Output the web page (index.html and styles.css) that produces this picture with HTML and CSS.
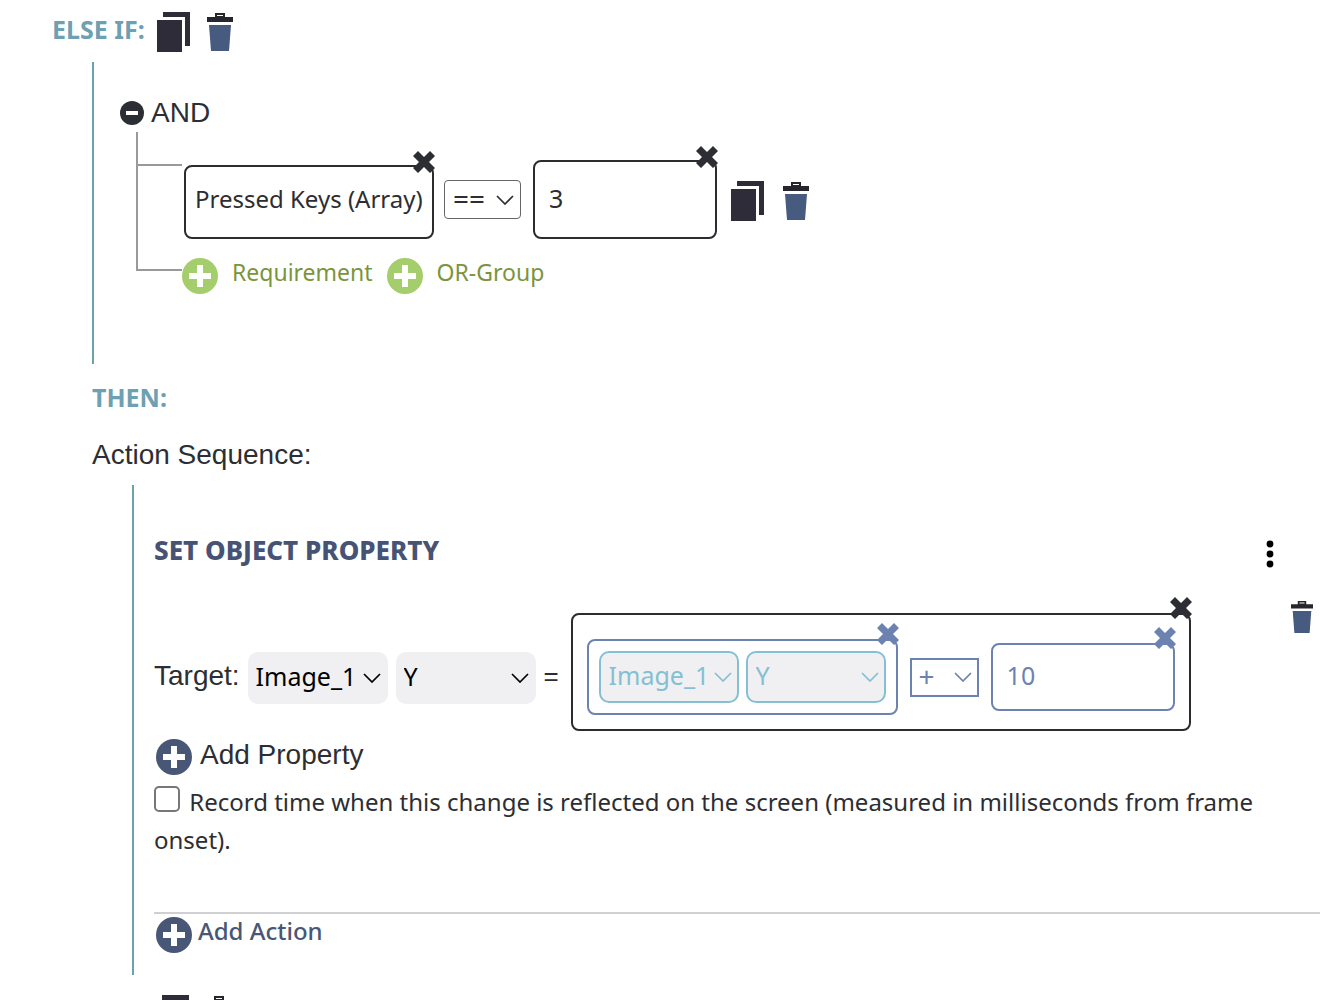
FILE: index.html
```
<!DOCTYPE html>
<html lang="en">
<head>
    <meta charset="UTF-8">
    <meta name="viewport" content="width=device-width, initial-scale=1">
    <title>Trigger Editor</title>
    <link rel="stylesheet" href="styles.css">
</head>
<body>

<!-- icon definitions -->
<svg class="icon-defs" aria-hidden="true">
    <symbol id="copy" viewBox="0 0 34 40"><path d="M6 0h27v34h-5V5H6z"/><path d="M0 8h25v32H0z"/></symbol>
    <symbol id="trash" viewBox="0 0 26 38">
        <path class="trash-lid" fill-rule="evenodd" d="M0 4h8V0h10v4h8v5H0zM10 2v1h6V2z"/>
        <path class="trash-can" d="M2 12h22l-2 26H4z"/>
    </symbol>
    <symbol id="plus" viewBox="0 0 36 36"><circle cx="18" cy="18" r="18"/><path fill="#fff" d="M15 7h6v8h8v6h-8v8h-6v-8H7v-6h8z"/></symbol>
    <symbol id="minus" viewBox="0 0 24 24"><circle cx="12" cy="12" r="12"/><path fill="#fff" d="M6 10h12v4H6z"/></symbol>
    <symbol id="close" viewBox="0 0 22 22"><path d="M5 0l6 6 6-6 5 5-6 6 6 6-5 5-6-6-6 6-5-5 6-6-6-6z"/></symbol>
    <symbol id="arrow" viewBox="0 0 18 10"><path fill="none" stroke="currentColor" stroke-width="1.7" d="M1 1l8 8 8-8"/></symbol>
    <symbol id="dots" viewBox="0 0 8 28"><circle cx="4" cy="4" r="3.4"/><circle cx="4" cy="14" r="3.4"/><circle cx="4" cy="24" r="3.4"/></symbol>
</svg>

<div class="branch">
    <div class="branch-header">
        <h2 class="keyword">ELSE IF:</h2>
        <button class="icon-button" aria-label="Copy branch"><svg class="copy"><use href="#copy"/></svg></button>
        <button class="icon-button" aria-label="Delete branch"><svg class="trash"><use href="#trash"/></svg></button>
    </div>

    <!-- condition -->
    <div class="condition">
        <div class="group-header">
            <button class="icon-button" aria-label="Collapse group"><svg class="minus"><use href="#minus"/></svg></button>
            <span>AND</span>
        </div>
        <div class="tree">
            <div class="tree-lines">
                <div class="line-first"></div>
                <div class="line-last"></div>
            </div>
            <div class="tree-content">
                <div class="requirement">
                    <div class="value-box keys-box">
                        <span>Pressed Keys (Array)</span>
                        <button class="close" aria-label="Clear value"><svg><use href="#close"/></svg></button>
                    </div>
                    <div class="select compare">
                        <select aria-label="Comparison"><option>==</option><option>!=</option></select>
                        <svg class="arrow"><use href="#arrow"/></svg>
                    </div>
                    <div class="value-box number-box">
                        <input type="text" value="3" aria-label="Compare with">
                        <button class="close" aria-label="Clear value"><svg><use href="#close"/></svg></button>
                    </div>
                    <div class="requirement-tools">
                        <button class="icon-button" aria-label="Copy requirement"><svg class="copy"><use href="#copy"/></svg></button>
                        <button class="icon-button" aria-label="Delete requirement"><svg class="trash"><use href="#trash"/></svg></button>
                    </div>
                </div>
                <div class="add-row">
                    <button class="add add-green"><svg class="plus"><use href="#plus"/></svg><span>Requirement</span></button>
                    <button class="add add-green"><svg class="plus"><use href="#plus"/></svg><span>OR-Group</span></button>
                </div>
            </div>
        </div>
    </div>

    <!-- actions -->
    <div class="then">
        <h2 class="keyword">THEN:</h2>
        <p class="sequence-title">Action Sequence:</p>
        <div class="sequence">
            <div class="action-header">
                <h3>SET OBJECT PROPERTY</h3>
                <button class="icon-button" aria-label="Action menu"><svg class="dots"><use href="#dots"/></svg></button>
            </div>
            <div class="property">
                <div class="target">
                    <span class="target-label">Target:</span>
                    <div class="select filled">
                        <select aria-label="Target object"><option>Image_1</option></select>
                        <svg class="arrow"><use href="#arrow"/></svg>
                    </div>
                    <div class="select filled">
                        <select aria-label="Target property"><option>Y</option><option>X</option></select>
                        <svg class="arrow"><use href="#arrow"/></svg>
                    </div>
                    <span class="equals">=</span>
                </div>
                <div class="value-box expression">
                    <div class="value-box blue operand">
                        <div class="select filled light">
                            <select aria-label="Source object"><option>Image_1</option></select>
                            <svg class="arrow"><use href="#arrow"/></svg>
                        </div>
                        <div class="select filled light">
                            <select aria-label="Source property"><option>Y</option><option>X</option></select>
                            <svg class="arrow"><use href="#arrow"/></svg>
                        </div>
                        <button class="close" aria-label="Clear value"><svg><use href="#close"/></svg></button>
                    </div>
                    <div class="select operator">
                        <select aria-label="Operator"><option>+</option><option>-</option></select>
                        <svg class="arrow"><use href="#arrow"/></svg>
                    </div>
                    <div class="value-box blue amount">
                        <input type="text" value="10" aria-label="Amount">
                        <button class="close" aria-label="Clear value"><svg><use href="#close"/></svg></button>
                    </div>
                    <button class="close" aria-label="Clear expression"><svg><use href="#close"/></svg></button>
                </div>
                <button class="icon-button delete-property" aria-label="Delete property"><svg class="trash small"><use href="#trash"/></svg></button>
            </div>
            <button class="add add-property"><svg class="plus"><use href="#plus"/></svg><span>Add Property</span></button>
            <div class="record">
                <input type="checkbox" id="recordTime">
                <label for="recordTime">Record time when this change is reflected on the screen (measured in milliseconds from frame onset).</label>
            </div>
            <hr>
            <button class="add add-action"><svg class="plus"><use href="#plus"/></svg><span>Add Action</span></button>
        </div>
    </div>
</div>

<div class="branch">
    <div class="branch-header next">
        <button class="icon-button" aria-label="Copy branch"><svg class="copy"><use href="#copy"/></svg></button>
        <button class="icon-button" aria-label="Delete branch"><svg class="trash"><use href="#trash"/></svg></button>
    </div>
</div>

</body>
</html>
```
FILE: styles.css
```
* {box-sizing: border-box;}
body {margin: 0; background: #fff; color: #2d2e33; font: 24px "Noto Sans", "Open Sans", sans-serif;}
h2, h3, p {margin: 0;}
button, select, input {font: inherit; color: inherit;}
button {padding: 0; border: none; background: none; cursor: pointer;}
svg {display: block; fill: currentColor;}

/* icons */
.icon-defs {position: absolute; width: 0; height: 0;}
.icon-button {display: block; flex: none; color: #2d2c38;}
.copy {width: 34px; height: 40px;}
.trash {width: 26px; height: 38px;}
.trash.small {width: 22px; height: 34px;}
.trash-lid {fill: #26262c;}
.trash-can {fill: #475a80;}
.plus {width: 36px; height: 36px;}
.minus {width: 24px; height: 24px; color: #2b2e34;}
.dots {width: 8px; height: 28px; color: #000;}

/* branch */
.branch {padding-left: 52px;}
.branch-header {display: flex; align-items: center; gap: 16px; height: 62px; padding-top: 2px;}
.branch-header .keyword {margin-right: -4px; padding-bottom: 6px;}
.branch-header.next {margin: 8px 0 0 104px;}
.keyword {color: #6da0b2; font-size: 25px; line-height: 34px; font-weight: 700;}

/* condition */
.condition {margin-left: 40px; padding: 32px 0 70px 26px; border-left: 2px solid #6aa3ae;}
.group-header {display: flex; align-items: center; gap: 7px; height: 38px; font: 28px/38px "Liberation Sans", Arial, sans-serif;}
.tree {display: flex; padding-left: 16px;}
.tree-lines {width: 46px; flex: none;}
.line-first, .line-last {border-left: 2px solid #999; border-bottom: 2px solid #999;}
.line-first {height: 34px;}
.line-last {height: 105px;}
.tree-content {padding-top: 28px;}
.requirement {display: flex; align-items: center; padding-left: 2px;}
.requirement-tools {display: flex; align-items: center; gap: 18px; margin-left: 14px; padding-top: 3px;}
.add-row {display: flex; gap: 14px; margin-top: 19px;}

/* value boxes */
.value-box {position: relative; border: 2px solid #2b2b30; border-radius: 8px; color: #2d2e33;}
.value-box > input {display: block; width: 100%; height: 100%; padding: 0 14px 4px; border: none; outline: none; background: none; font-size: 25px;}
.close {position: absolute; top: -16px; right: -3px;}
.close svg {width: 22px; height: 22px;}
.keys-box {align-self: flex-end; padding: 0 9px; line-height: 64px; height: 74px; min-width: 250px; white-space: nowrap;}
.number-box {width: 184px; height: 79px;}
.blue {border-color: #6c83b1; color: #6c83b1;}
.expression {display: flex; align-items: center; gap: 12px; flex: none; padding: 24px 14px 14px;}
.expression .close {top: -18px;}
.operand {display: flex; gap: 7px; padding: 10px;}
.amount {width: 184px; height: 68px;}

/* drop-downs */
.select {position: relative; flex: none;}
.select select {display: block; width: 100%; height: 100%; margin: 0; padding: 0 8px; border: 1px solid #666; border-radius: 4px;
    background: none; appearance: none; -webkit-appearance: none;}
.arrow {position: absolute; right: 7px; top: 50%; width: 18px; height: 10px; margin-top: -5px; pointer-events: none;}
.compare {width: 77px; height: 39px; margin: 0 12px 0 10px;}
.compare select {padding: 0 8px 4px; font-size: 28px; line-height: 32px;}
.filled {width: 140px; height: 52px; color: #000;}
.filled select {padding: 0 8px 4px; border: none; border-radius: 10px; background: #f0f0f2; font-size: 25px;}
.light {color: #85bfd3;}
.light select {border: 2px solid #85bfd3;}
.operator {width: 69px; height: 39px; color: #6c83b1;}
.operator select {padding: 0 7px 4px; border: 2px solid #6c83b1; border-radius: 0; font-size: 28px; line-height: 32px;}

/* actions */
.then {padding-left: 40px;}
.then > .keyword {padding: 16px 0 18px;}
.sequence-title {height: 53px; font: 28px/46px "Liberation Sans", Arial, sans-serif;}
.sequence {margin: 0 14px 0 40px; padding: 48px 0 22px 20px; border-left: 2px solid #6aa3ae;}
.action-header {display: flex; align-items: center; justify-content: space-between; padding-right: 46px; height: 34px;}
.action-header h3 {color: #475375; font-size: 26px; line-height: 34px; font-weight: 800;}
.action-header .icon-button {padding-top: 8px;}
.property {display: flex; align-items: center; margin-top: 46px;}
.target {display: flex; align-items: center; gap: 8px; padding-top: 12px; font: 28px "Liberation Sans", Arial, sans-serif;}
.target select {font: 25px "Noto Sans", "Open Sans", sans-serif;}
.target-label, .equals {padding-bottom: 4px;}
.equals {width: 27px; font-size: 26px;}
.delete-property {align-self: flex-start; margin: -13px 7px 0 auto;}

.add {display: flex; align-items: center;}
.add span {padding-bottom: 8px; line-height: 28px;}
.add-green {gap: 14px; color: #a4cd6b; font-size: 23px;}
.add-green span {color: #7c943c;}
.add-property {gap: 8px; margin: 8px 0 8px 2px; color: #475775;}
.add-property span {padding-bottom: 4px; color: #2d2e33; font: 28px "Liberation Sans", Arial, sans-serif;}
.add-action {gap: 6px; margin-left: 2px; color: #475775; font-weight: 500;}

.record {line-height: 38px; margin-right: 40px;}
.record input {appearance: none; -webkit-appearance: none; width: 26px; height: 26px; margin: 0 3px 0 0; border: 2px solid #777;
    border-radius: 5px; background: #fff; vertical-align: -1px;}
.record input:checked {background: #475775;}
hr {height: 2px; margin: 53px 0 3px; border: none; background: #d0cfd2;}
```
